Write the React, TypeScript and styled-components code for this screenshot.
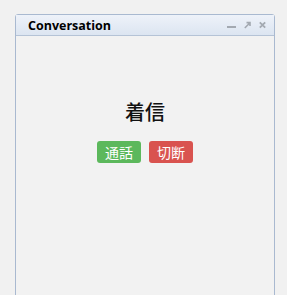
import { createGlobalStyle } from 'styled-components';
import styled from 'styled-components';

const GlobalStyle = createGlobalStyle`
  html, body {
    margin: 0;
    padding: 0;
    background: #f1f1f1;
    font-family: "Open Sans", "Noto Sans CJK JP", sans-serif;
  }
`;

const Page = styled.div`
  width: 287px;
  height: 295px;
  padding: 14px 12px 0 15px;
  box-sizing: border-box;
  overflow: hidden;
`;

const Panel = styled.div`
  width: 260px;
  height: 290px;
  border: 1px solid #a9b9d0;
  border-radius: 3px 3px 0 0;
  background: #f2f2f2;
  display: flex;
  flex-direction: column;
  box-sizing: border-box;
`;

const Header = styled.div`
  height: 20px;
  display: flex;
  align-items: center;
  justify-content: space-between;
  padding: 0 8px 0 12px;
  background: linear-gradient(#eef2f9, #dce5f1);
  border-bottom: 1px solid #b5c3d6;
  flex-shrink: 0;
`;

const Title = styled.span`
  font-family: "Open Sans", sans-serif;
  font-size: 12.5px;
  font-weight: bold;
  color: #000;
`;

const Tools = styled.div`
  display: flex;
  align-items: center;
  gap: 8px;
  color: #a3a9b1;
`;

const Body = styled.div`
  flex: 1;
  display: flex;
  flex-direction: column;
  align-items: center;
  padding-top: 64px;
`;

const Heading = styled.div`
  font-family: "Noto Sans CJK JP", sans-serif;
  font-size: 20px;
  font-weight: 500;
  line-height: 24px;
  color: #111;
`;

const Actions = styled.div`
  display: flex;
  gap: 8px;
  margin-top: 17px;
`;

const Button = styled.button<{ $tone: 'green' | 'red' }>`
  font-family: "Noto Sans CJK JP", sans-serif;
  font-size: 14px;
  line-height: 22px;
  height: 22px;
  padding: 0 8px;
  border: none;
  border-radius: 3px;
  color: #fff;
  background: ${({ $tone }) => ($tone === 'green' ? '#5cb85c' : '#d9534f')};
`;

export default function App() {
  return (
    <>
      <GlobalStyle />
      <Page>
        <Panel>
          <Header>
            <Title>Conversation</Title>
            <Tools>
              <svg width="9" height="8" viewBox="0 0 9 8">
                <rect x="0" y="5" width="9" height="2" fill="currentColor" />
              </svg>
              <svg width="7" height="8" viewBox="0 0 7 8">
                <path d="M0.8 7 L5.5 2.3 M2.5 1.6 H6 V5" stroke="currentColor" strokeWidth="1.6" fill="none" />
              </svg>
              <svg width="7" height="8" viewBox="0 0 7 8">
                <path d="M0.8 1.3 L6.2 6.7 M6.2 1.3 L0.8 6.7" stroke="currentColor" strokeWidth="1.8" />
              </svg>
            </Tools>
          </Header>
          <Body>
            <Heading>着信</Heading>
            <Actions>
              <Button $tone="green">通話</Button>
              <Button $tone="red">切断</Button>
            </Actions>
          </Body>
        </Panel>
      </Page>
    </>
  );
}
